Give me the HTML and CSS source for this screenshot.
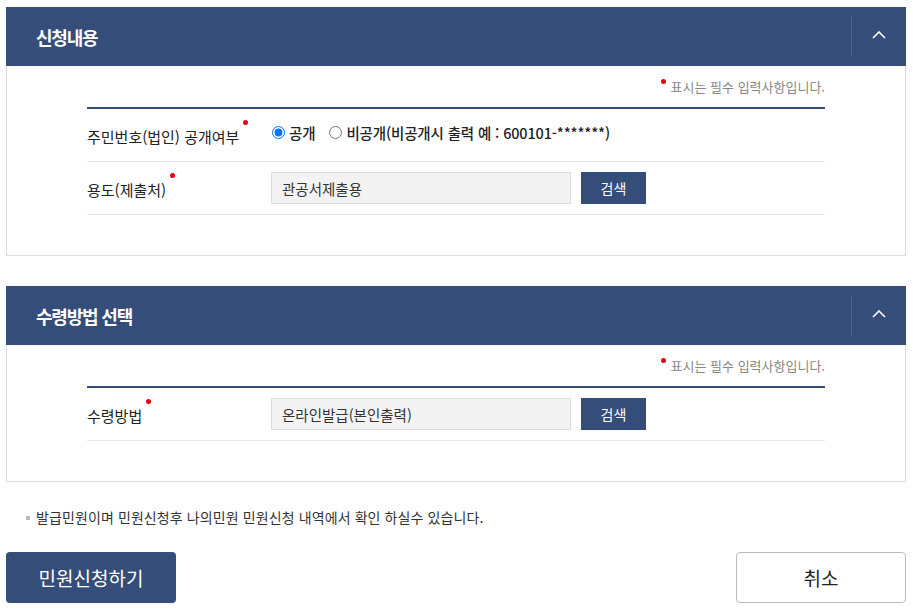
FILE: index.html
```html
<!DOCTYPE html>
<html lang="ko">
<head>
    <meta charset="UTF-8">
    <meta name="viewport" content="width=device-width, initial-scale=1.0">
    <title>민원신청</title>
    <link rel="stylesheet" href="styles.css">
</head>
<body>
    <div class="wrap">
        <div class="panel">
            <div class="panel-head">
                <h2>신청내용</h2>
                <button class="toggle" type="button" aria-label="접기">
                    <svg width="14" height="8" viewBox="0 0 14 8"><polyline points="1,7 7,1 13,7" fill="none" stroke="#fff" stroke-width="1.6"/></svg>
                </button>
            </div>
            <div class="panel-body">
                <p class="req-note"><span class="dot"></span>표시는 필수 입력사항입니다.</p>
                <div class="form-table">
                    <div class="row">
                        <div class="label">주민번호(법인) 공개여부<span class="dot"></span></div>
                        <div class="value radios">
                            <label><input type="radio" name="open" checked> 공개</label>
                            <label><input type="radio" name="open"> 비공개(비공개시 출력 예 : 600101-*******)</label>
                        </div>
                    </div>
                    <div class="row">
                        <div class="label">용도(제출처)<span class="dot"></span></div>
                        <div class="value">
                            <input class="field" type="text" value="관공서제출용" readonly>
                            <button class="btn-search" type="button">검색</button>
                        </div>
                    </div>
                </div>
            </div>
        </div>

        <div class="panel">
            <div class="panel-head">
                <h2>수령방법 선택</h2>
                <button class="toggle" type="button" aria-label="접기">
                    <svg width="14" height="8" viewBox="0 0 14 8"><polyline points="1,7 7,1 13,7" fill="none" stroke="#fff" stroke-width="1.6"/></svg>
                </button>
            </div>
            <div class="panel-body">
                <p class="req-note"><span class="dot"></span>표시는 필수 입력사항입니다.</p>
                <div class="form-table">
                    <div class="row">
                        <div class="label">수령방법<span class="dot"></span></div>
                        <div class="value">
                            <input class="field" type="text" value="온라인발급(본인출력)" readonly>
                            <button class="btn-search" type="button">검색</button>
                        </div>
                    </div>
                </div>
            </div>
        </div>

        <p class="info">발급민원이며 민원신청후 나의민원 민원신청 내역에서 확인 하실수 있습니다.</p>

        <div class="actions">
            <button class="btn-submit" type="button">민원신청하기</button>
            <button class="btn-cancel" type="button">취소</button>
        </div>
    </div>
</body>
</html>
```

FILE: styles.css
```css
body {
    margin: 0;
    font-family: "Noto Sans CJK KR", "Noto Sans", sans-serif;
    color: #222;
    background: #fff;
}
.wrap {
    width: 900px;
    padding: 7px 0 0 6px;
}
.panel {
    margin-bottom: 30px;
}
.panel-head {
    height: 59px;
    background-color: #344d79;
    display: flex;
    align-items: center;
    justify-content: space-between;
}
.panel-head h2 {
    margin: 0;
    padding-left: 30px;
    color: #fff;
    font-size: 18px;
    font-weight: bold;
    letter-spacing: -1.2px;
}
.toggle {
    width: 55px;
    height: 40px;
    border: none;
    border-left: 1px solid #4a6290;
    background: none;
    padding: 0 0 4px 0;
    display: flex;
    align-items: center;
    justify-content: center;
    cursor: pointer;
}
.panel-body {
    border: 1px solid #ddd;
    border-top: none;
    padding: 12px 80px 40px 80px;
}
.req-note {
    margin: 0 0 11px 0;
    text-align: right;
    font-size: 13px;
    line-height: 18px;
    color: #888;
}
.dot {
    display: inline-block;
    width: 5px;
    height: 5px;
    border-radius: 50%;
    background: #e60012;
    vertical-align: top;
    margin: 1px 5px 0 0;
}
.label .dot {
    margin: 0 0 0 4px;
    position: relative;
    top: -6px;
}
.form-table {
    border-top: 2px solid #344d79;
}
.row {
    display: flex;
    align-items: center;
    height: 52px;
    border-bottom: 1px solid #e6e6e6;
}
.label {
    width: 184px;
    font-size: 15px;
    color: #222;
    padding-top: 3px;
}
.value {
    display: flex;
    align-items: center;
}
.radios {
    gap: 13px;
    font-size: 14.5px;
    font-weight: 500;
    letter-spacing: -0.15px;
    color: #222;
    padding-bottom: 6px;
}
.radios label {
    display: flex;
    align-items: center;
    gap: 4px;
}
.radios input {
    margin: 0 0 0 1px;
    width: 13px;
    height: 13px;
}
.field {
    width: 300px;
    height: 32px;
    box-sizing: border-box;
    border: 1px solid #ddd;
    background: #f3f3f3;
    padding: 0 10px;
    font-family: inherit;
    font-size: 14.5px;
    color: #333;
}
.btn-search {
    margin-left: 10px;
    width: 65px;
    height: 32px;
    border: none;
    background-color: #344d79;
    color: #fff;
    font-family: inherit;
    font-size: 14px;
    cursor: pointer;
}
.info {
    margin: -4px 0 0 0;
    padding-left: 20px;
    font-size: 14px;
    line-height: 18px;
    letter-spacing: 0.1px;
    color: #333;
}
.info:before {
    content: "";
    display: inline-block;
    width: 4px;
    height: 4px;
    background: #bbb;
    vertical-align: middle;
    margin: 0 6px 3px 0;
}
.actions {
    display: flex;
    justify-content: space-between;
    margin-top: 26px;
}
.actions button {
    width: 170px;
    height: 51px;
    border-radius: 4px;
    font-family: inherit;
    font-size: 19px;
    cursor: pointer;
}
.btn-submit {
    border: none;
    background-color: #344d79;
    color: #fff;
}
.btn-cancel {
    border: 1px solid #bbb;
    background: #fff;
    color: #222;
}
```
